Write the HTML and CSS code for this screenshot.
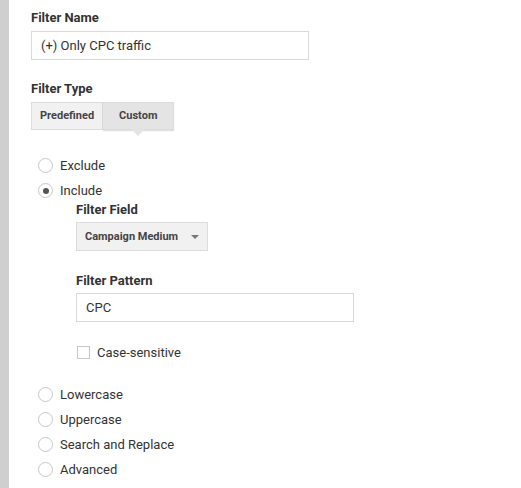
FILE: index.html
```html
<!DOCTYPE html>
<html>
<head>
<meta charset="utf-8">
<link rel="stylesheet" href="styles.css">
</head>
<body>
<div class="page">
  <div class="rail"></div>
  <form class="editor">
    <div class="label">Filter Name</div>
    <div class="textbox">(+) Only CPC traffic</div>

    <div class="label type-label">Filter Type</div>
    <div class="toggle">
      <div class="tab">Predefined</div>
      <div class="tab active">Custom</div>
    </div>

    <div class="options">
      <div class="option"><span class="radio"></span>Exclude</div>
      <div class="option"><span class="radio on"></span>Include</div>
      <div class="sub">
        <div class="label">Filter Field</div>
        <div class="select">Campaign Medium<span class="caret"></span></div>
        <div class="label pattern-label">Filter Pattern</div>
        <div class="textbox pattern-box">CPC</div>
        <div class="check"><span class="box"></span>Case-sensitive</div>
      </div>
      <div class="option first-after"><span class="radio"></span>Lowercase</div>
      <div class="option"><span class="radio"></span>Uppercase</div>
      <div class="option"><span class="radio"></span>Search and Replace</div>
      <div class="option"><span class="radio"></span>Advanced</div>
    </div>
  </form>
</div>
</body>
</html>
```

FILE: styles.css
```css
html, body {
  margin: 0;
  padding: 0;
  background: #fff;
}

body {
  font-family: Roboto, "Liberation Sans", Arial, sans-serif;
  color: #333;
  font-size: 13px;
}

.page {
  display: flex;
  height: 488px;
  overflow: hidden;
}

.rail {
  width: 9px;
  flex: none;
  background: #cfcfcf;
}

.editor {
  padding: 10px 0 0 22px;
  display: flex;
  flex-direction: column;
  align-items: flex-start;
}

.label {
  font-weight: 700;
  font-size: 13px;
  line-height: 16px;
  color: #333;
}

.textbox {
  box-sizing: border-box;
  width: 278px;
  height: 29px;
  border: 1px solid #d9d9d9;
  margin-top: 5px;
  padding: 0 9px;
  line-height: 27px;
  font-size: 13px;
  color: #333;
}

.type-label {
  margin-top: 21px;
}

.toggle {
  display: flex;
  margin-top: 5px;
}

.tab {
  position: relative;
  box-sizing: border-box;
  height: 28px;
  line-height: 26px;
  font-size: 11px;
  font-weight: 700;
  color: #444;
  border: 1px solid #dcdcdc;
  background: #f1f1f1;
  padding: 0 8px;
}

.tab + .tab {
  border-left: none;
}

.tab.active {
  background: #e4e4e4;
  padding: 0 16px;
  box-shadow: 0 1px 1px rgba(0, 0, 0, 0.12);
}

/* pointer under the selected tab */
.tab.active::after {
  content: "";
  position: absolute;
  left: 50%;
  bottom: -7px;
  margin-left: -7px;
  border-left: 7px solid transparent;
  border-right: 7px solid transparent;
  border-top: 7px solid #e4e4e4;
}

.options {
  margin-top: 23px;
  margin-left: 7px;
  display: flex;
  flex-direction: column;
}

.option {
  display: flex;
  align-items: center;
  height: 25px;
  font-size: 13px;
  color: #333;
}

.radio {
  box-sizing: border-box;
  width: 15px;
  height: 15px;
  border: 1px solid #c8c8c8;
  border-radius: 50%;
  margin-right: 7px;
  display: flex;
  align-items: center;
  justify-content: center;
}

.radio.on::before {
  content: "";
  width: 6px;
  height: 6px;
  border-radius: 50%;
  background: #555;
}

.sub {
  margin-left: 38px;
  margin-top: -1px;
  display: flex;
  flex-direction: column;
  align-items: flex-start;
}

.select {
  box-sizing: border-box;
  width: 132px;
  height: 29px;
  margin-top: 4px;
  border: 1px solid #dcdcdc;
  background: #f1f1f1;
  font-size: 11px;
  font-weight: 700;
  color: #444;
  padding: 0 8px;
  line-height: 27px;
  display: flex;
  align-items: center;
  justify-content: space-between;
}

.caret {
  width: 0;
  height: 0;
  border-left: 4px solid transparent;
  border-right: 4px solid transparent;
  border-top: 4px solid #777;
}

.pattern-label {
  margin-top: 22px;
}

.pattern-box {
  margin-top: 4px;
}

.check {
  display: flex;
  align-items: center;
  margin-top: 23px;
  font-size: 13px;
  color: #333;
}

.box {
  box-sizing: border-box;
  width: 13px;
  height: 13px;
  border: 1px solid #c8c8c8;
  margin: 0 7px 0 1px;
}

.first-after {
  margin-top: 22px;
}
```
